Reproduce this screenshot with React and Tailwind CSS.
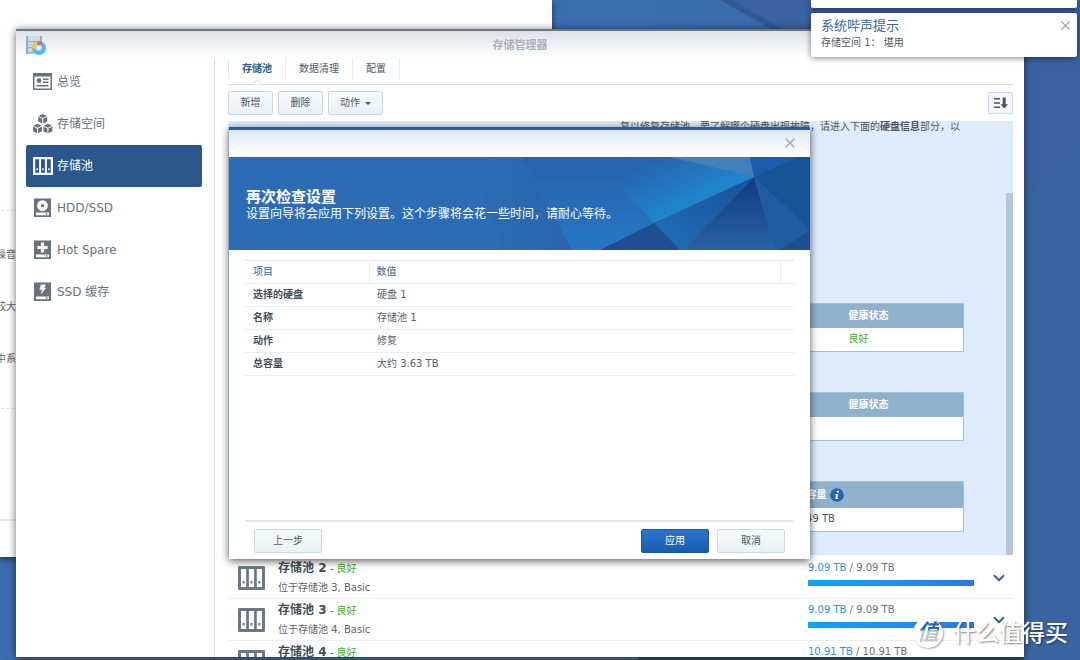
import clsx from 'clsx'
import { ChevronDown, X } from 'lucide-react'

function OverviewIcon() {
  return (
    <svg width="20" height="18" viewBox="0 0 20 18" fill="currentColor">
      <path fillRule="evenodd" d="M0 0h19v17H0zM1.5 3.5v12h16v-12z" />
      <circle cx="6" cy="7.6" r="2.4" />
      <path d="M10 5.5h5.5v1.5H10zM10 8.5h5.5V10H10zM3.5 12h12v1.5h-12z" />
    </svg>
  )
}

function Cube({ x, y }) {
  return (
    <g transform={`translate(${x} ${y})`}>
      <path d="M4.5 0 8.6 1.9 4.5 3.9.4 1.9z" />
      <path d="M0 2.8 4 4.8v4.6L0 7.4z" />
      <path d="M9 2.8 5 4.8v4.6l4-2z" />
    </g>
  )
}

function VolumeIcon() {
  return (
    <svg width="20" height="20" viewBox="0 0 20 20" fill="currentColor">
      <Cube x={5.2} y={0} />
      <Cube x={0} y={9.8} />
      <Cube x={10.4} y={9.8} />
    </svg>
  )
}

function PoolIcon({ className }) {
  return (
    <svg className={className} viewBox="0 0 27 24" fill="currentColor">
      <path
        fillRule="evenodd"
        d="M1 0h25a1 1 0 0 1 1 1v22a1 1 0 0 1-1 1H1a1 1 0 0 1-1-1V1a1 1 0 0 1 1-1zM3 3v18h5.2V3zM10.9 3v18h5.2V3zM18.8 3v18H24V3z"
      />
      <path d="M4.6 15h2v2.6h-2zM12.5 15h2v2.6h-2zM20.4 15h2v2.6h-2z" />
    </svg>
  )
}

function DriveIcon({ children }) {
  return (
    <svg width="20" height="20" viewBox="0 0 20 20" fill="currentColor">
      <path fillRule="evenodd" d="M1 .5h17v18.5H1zM3 14.5v2.8h13v-2.8z" />
      <path d="M12.8 15.2h1.6v1.4h-1.6z" />
      {children}
    </svg>
  )
}

const navItems = [
  { label: '总览', icon: <OverviewIcon /> },
  { label: '存储空间', icon: <VolumeIcon /> },
  { label: '存储池', icon: <PoolIcon className="h-[18px] w-5" />, active: true },
  {
    label: 'HDD/SSD',
    icon: (
      <DriveIcon>
        <path fill="#fff" fillRule="evenodd" d="M9.5 2.2a5.4 5.4 0 1 0 0 10.8 5.4 5.4 0 0 0 0-10.8zm0 3.7a1.7 1.7 0 1 1 0 3.4 1.7 1.7 0 0 1 0-3.4z" />
      </DriveIcon>
    ),
  },
  {
    label: 'Hot Spare',
    icon: (
      <DriveIcon>
        <path fill="#fff" d="M7.9 2.6h3.2v3.3h3.5v3.2h-3.5v3.5H7.9V9.1H4.4V5.9h3.5z" />
      </DriveIcon>
    ),
  },
  {
    label: 'SSD 缓存',
    icon: (
      <DriveIcon>
        <path fill="#fff" d="M8 2.6h5l-1.8 3.2h2.1l-5.8 6.8 1.6-4.8H6.4z" />
      </DriveIcon>
    ),
  },
]

const pools = [
  { name: '存储池 2', place: '位于存储池 3, Basic', size: '9.09 TB' },
  { name: '存储池 3', place: '位于存储池 4, Basic', size: '9.09 TB' },
  { name: '存储池 4', place: '位于存储池 5, Basic', size: '10.91 TB' },
]

const settings = [
  ['选择的硬盘', '硬盘 1'],
  ['名称', '存储池 1'],
  ['动作', '修复'],
  ['总容量', '大约 3.63 TB'],
]

function Wallpaper() {
  return (
    <svg className="absolute inset-0 h-full w-full" viewBox="0 0 1080 660" preserveAspectRatio="none">
      <defs>
        <linearGradient id="wall" x1="0" x2="1" y1="0" y2="0">
          <stop offset="0" stopColor="#3c6eb0" />
          <stop offset="0.6" stopColor="#3c6eb1" />
          <stop offset="1" stopColor="#3a649f" />
        </linearGradient>
      </defs>
      <path fill="url(#wall)" d="M0 0h1080v660H0z" />
      <path fill="#3b62a1" d="M731 0h349v150L1024 200z" />
      <path fill="#325994" d="M720 0h11l52 29h-12z" />
      <path fill="#2f4f82" d="M636 656h388v4H640z" />
    </svg>
  )
}

function Button({ className, primary, children }) {
  return (
    <button
      type="button"
      className={clsx(
        'flex items-center justify-center rounded-[2px] border bg-gradient-to-b',
        primary
          ? 'border-[#1c57a4] from-[#2c74cb] to-[#165cb3] text-white'
          : 'border-[#cbd7e2] from-[#f6fafd] to-[#e9f0f6] text-[#4f5962]',
        className,
      )}
    >
      {children}
    </button>
  )
}

function BackgroundWindow() {
  return (
    <div className="absolute top-0 right-[528px] bottom-[103px] -left-1 flex flex-col bg-white pt-[210px] text-[#5f656b] shadow-[0_2px_8px_rgba(0,0,0,0.5)]">
      <div className="border-t border-dashed border-[#d8e6f2] pt-9">噪音</div>
      <div className="pt-9">较大</div>
      <div className="pt-9">中系</div>
      <div className="mt-[41px] border-t border-dashed border-[#d8e6f2]" />
      <div className="mt-auto h-[38px] border-t-2 border-[#e6e7e9]" />
    </div>
  )
}

function Sidebar() {
  return (
    <nav className="w-[199px] shrink-0 border-r border-[#dcdfe2] pt-[3px] pr-3 pl-[10px] text-xs">
      {navItems.map((item) => (
        <a
          key={item.label}
          href="#"
          className={clsx(
            'flex h-[42px] items-center gap-1 rounded-[2px] pl-[7px]',
            item.active ? 'bg-[#2a588c] text-white' : 'text-[#68717c]',
          )}
        >
          {item.icon}
          <span>{item.label}</span>
        </a>
      ))}
    </nav>
  )
}

function Tabs() {
  return (
    <div className="relative border-b border-[#d5d8dc] pb-[5px]">
      <div className="flex h-[21px] border-l border-[#e1e9f1]">
        {['存储池', '数据清理', '配置'].map((tab, i) => (
          <button
            key={tab}
            type="button"
            className={clsx(
              'border-r border-[#e1e9f1] px-[13px]',
              i === 0 ? 'font-bold text-[#2d5b92]' : 'text-[#4f5962]',
            )}
          >
            {tab}
          </button>
        ))}
      </div>
      <svg className="absolute -bottom-px left-6" width="10" height="6" viewBox="0 0 10 6">
        <path d="M0 5.5 5 .5l5 5" fill="#fff" stroke="#d5d8dc" />
      </svg>
    </div>
  )
}

function Toolbar() {
  return (
    <div className="flex items-center gap-[5px] py-[6px]">
      <Button className="h-6 w-[45px]">新增</Button>
      <Button className="h-6 w-[45px]">删除</Button>
      <Button className="h-6 w-[55px] gap-[5px]">
        动作
        <svg width="6" height="3" viewBox="0 0 6 3" fill="currentColor">
          <path d="M0 0h6L3 3z" />
        </svg>
      </Button>
      <button
        type="button"
        aria-label="排序"
        className="ml-auto flex h-[22px] w-[25px] items-center justify-center rounded-[2px] border border-[#cbd7e2] bg-[#f3f7fb] text-[#4a525c]"
      >
        <svg width="14" height="12" viewBox="0 0 14 12" fill="currentColor">
          <path d="M0 1h6v1.6H0zM0 5.2h6v1.6H0zM0 9.4h6V11H0zM8.7.6h3v6.6H14l-3.8 4.2-3.6-4.2h2.1z" />
        </svg>
      </button>
    </div>
  )
}

function InfoTable({ head, value, colClass, headClass, children }) {
  return (
    <table className="w-full table-fixed border border-[#a5bfd6] bg-white text-left">
      <colgroup>
        <col />
        <col className={colClass} />
      </colgroup>
      <thead>
        <tr className={clsx('bg-[#8fb1cc] text-white', headClass)}>
          <th />
          <th className="pl-[9px] font-bold">
            <span className="flex items-center gap-[3px]">
              {head}
              {children}
            </span>
          </th>
        </tr>
      </thead>
      <tbody>
        <tr className="h-6">
          <td />
          <td className="pl-[9px]">{value}</td>
        </tr>
      </tbody>
    </table>
  )
}

function PoolDetails() {
  return (
    <div className="relative bg-[#deebfb] pr-[49px] pb-[23px] pl-[50px] text-[#50575e]">
      <p className="pr-1 text-right leading-3">
        复以修复存储池，要了解哪个硬盘出现故障，请进入下面的<b>硬盘信息</b>部分，以
      </p>
      <div className="flex flex-col gap-10 pt-[170px]">
        <InfoTable
          head="健康状态"
          value={<span className="text-[#3daf2c]">良好</span>}
          colClass="w-[124px]"
          headClass="h-6"
        />
        <InfoTable head="健康状态" colClass="w-[124px]" headClass="h-6" />
        <InfoTable head="总容量" value="5.49 TB" colClass="w-[176px]" headClass="h-[26px]">
          <svg width="14" height="14" viewBox="0 0 14 14">
            <circle cx="7" cy="7" r="6.8" fill="#2064b4" />
            <circle cx="7.9" cy="3.7" r="1.1" fill="#fff" />
            <path d="M5.3 6h2.9L7.3 10h1l-.2.9H5.2L6 6.9H5.1z" fill="#fff" />
          </svg>
        </InfoTable>
      </div>
      <div className="absolute top-[72px] right-0 bottom-0 w-[7px] bg-[#b7c6d7]" />
    </div>
  )
}

function PoolRow({ pool }) {
  return (
    <div className="flex h-[42px] shrink-0 items-center border-b border-[#eceff5] pr-[5px] pl-[10px]">
      <PoolIcon className="h-6 w-[27px] text-[#6c7783]" />
      <div className="ml-[13px] flex-1">
        <div className="leading-4 text-[#3daf2c]">
          <b className="text-xs leading-4 text-[#454c54]">{pool.name}</b>
          <span className="text-[#50575e]"> - </span>
          良好
        </div>
        <div className="mt-[3px] leading-4 text-[#5b636b]">{pool.place}</div>
      </div>
      <div className="w-[166px] self-start pt-[3px]">
        <div className="leading-4 text-[#6a6f75]">
          <span className="text-[#2f8be6]">{pool.size}</span> / {pool.size}
        </div>
        <div className="mt-1 h-[6px] bg-gradient-to-r from-[#02a7fd] to-[#2c77e3]" />
      </div>
      <button type="button" aria-label="展开" className="ml-4 text-[#35609b]">
        <ChevronDown size={18} strokeWidth={2.5} />
      </button>
    </div>
  )
}

function AppIcon() {
  return (
    <svg width="21" height="19" viewBox="0 0 21 19">
      <path fill="#c9dbe9" d="M0 0h16v18H0z" />
      <path fill="#90adc3" d="M0 0h2v18H0zM14 0h2v8h-2zM2 5h12v1.2H2zM2 11h5v1.2H2zM2 16h5v1.2H2z" />
      <circle cx="13" cy="12" r="5" fill="none" stroke="#52b7f5" strokeWidth="4" />
      <path fill="#fbc94a" d="M11.5 5.2v4.3l-1.7 4-3.5-1.3c0-3.6 2.2-6.3 5.2-7z" />
      <path fill="#f0605d" d="M11.5 5.2c1.6-.4 3.3-.1 4.6.7l-2 3.4-2.6.2z" />
      <circle cx="12.8" cy="11.6" r="1.9" fill="#eef7fd" />
    </svg>
  )
}

function StorageManager() {
  return (
    <div className="absolute top-[29px] right-14 bottom-[3px] left-4 flex flex-col overflow-hidden border-t-2 border-[#6c7681] bg-white shadow-[0_1px_8px_rgba(0,0,0,0.6)]">
      <header className="grid h-[27px] shrink-0 grid-cols-[1fr_auto_1fr] items-center bg-gradient-to-b from-[#dde2e7] to-white px-[10px] pt-[2px]">
        <AppIcon />
        <h1 className="text-[11px] font-bold text-[#abb2b9]">存储管理器</h1>
      </header>
      <div className="flex min-h-0 flex-1">
        <Sidebar />
        <main className="flex min-w-0 flex-1 flex-col pr-[11px] pl-[13px]">
          <Tabs />
          <Toolbar />
          <PoolDetails />
          <div className="flex flex-col pt-[2px]">
            {pools.map((pool) => (
              <PoolRow key={pool.name} pool={pool} />
            ))}
          </div>
        </main>
      </div>
    </div>
  )
}

function BannerArt() {
  return (
    <svg className="absolute inset-0 h-full w-full" viewBox="0 0 581 93" preserveAspectRatio="xMaxYMid slice">
      <defs>
        <linearGradient id="left" x1="0" x2="0" y1="0" y2="1">
          <stop offset="0" stopColor="#2863aa" />
          <stop offset="1" stopColor="#2577c4" />
        </linearGradient>
        <linearGradient id="bright" gradientUnits="userSpaceOnUse" x1="400" y1="14" x2="425" y2="66">
          <stop offset="0" stopColor="#2765ae" />
          <stop offset="1" stopColor="#1f86ce" />
        </linearGradient>
        <linearGradient id="dark" x1="0" x2="0" y1="0" y2="1">
          <stop offset="0" stopColor="#103c84" />
          <stop offset="1" stopColor="#2a61a3" />
        </linearGradient>
        <linearGradient id="low" x1="1" x2="0" y1="0" y2="1">
          <stop offset="0" stopColor="#1a4f98" />
          <stop offset="1" stopColor="#2070b8" />
        </linearGradient>
        <linearGradient id="shade" x1="0" x2="1" y1="0" y2="0">
          <stop offset="0" stopColor="#2c6cb4" />
          <stop offset="1" stopColor="#2a66ac" />
        </linearGradient>
      </defs>
      <path fill="#2c6cb4" d="M0 0h581v93H0z" />
      <path fill="url(#shade)" d="M240 0h53l50 93h-70z" />
      <path fill="url(#left)" d="M293 0h150l82 20-154 73h-28z" />
      <path fill="url(#bright)" d="M365 4 441 0l84 20-100 46z" />
      <path fill="#4280ba" d="M441 0h80l4 20z" />
      <path fill="#1a5cae" d="M521 0h47l-43 20z" />
      <path fill="#195397" d="M525 20 568 0h13v73z" />
      <path fill="#1f5ca1" d="m525 20 56 53-30 20h-5z" />
      <path fill="#1d4f8f" d="M581 73v20h-30z" />
      <path fill="url(#dark)" d="m525 20 21 73h-92z" />
      <path fill="url(#low)" d="m525 20-71 73h-3l-26-27z" />
      <path fill="#1f4f93" d="m425 66 26 27h-80z" />
    </svg>
  )
}

function Wizard() {
  return (
    <div
      role="dialog"
      aria-labelledby="wizard-title"
      className="absolute top-[127px] right-[270px] bottom-[101px] left-[229px] flex flex-col border-t-[3px] border-[#2a5b95] bg-white shadow-[0_2px_8px_rgba(0,0,0,0.65)]"
    >
      <div className="flex h-[27px] shrink-0 items-center justify-end bg-gradient-to-b from-[#e2e8f1] to-white pr-3 pb-[2px]">
        <button type="button" aria-label="关闭" className="text-[#a0a6ad]">
          <X size={16} strokeWidth={2} />
        </button>
      </div>
      <div className="relative flex h-[93px] shrink-0 flex-col justify-center px-[17px] pt-1 text-white">
        <BannerArt />
        <h2 id="wizard-title" className="relative text-[15px] leading-4 font-bold">
          再次检查设置
        </h2>
        <p className="relative text-xs leading-[18px]">
          设置向导将会应用下列设置。这个步骤将会花一些时间，请耐心等待。
        </p>
      </div>
      <div className="flex-1 px-4 pt-[10px]">
        <table className="w-full table-fixed border-t border-[#dfe7f1] text-left text-[#5a6067]">
          <colgroup>
            <col className="w-[124px]" />
            <col />
            <col className="w-[14px]" />
          </colgroup>
          <thead>
            <tr className="h-[23px] border-b border-[#e6edf5] text-[#35649a]">
              <th className="pl-2 font-normal">项目</th>
              <th className="border-l border-[#e6edf5] pl-[7px] font-normal">数值</th>
              <th className="border-l border-[#e6edf5]" />
            </tr>
          </thead>
          <tbody>
            {settings.map(([name, value]) => (
              <tr key={name} className="h-[23px] border-b border-[#e9eef4]">
                <th className="pl-2 font-bold text-[#454c54]">{name}</th>
                <td colSpan={2} className="pl-2">
                  {value}
                </td>
              </tr>
            ))}
          </tbody>
        </table>
      </div>
      <div className="mx-4 flex gap-2 border-t-2 border-[#e3e5e8] px-[9px] pt-[7px] pb-[6px]">
        <Button className="mr-auto h-6 w-[68px]">上一步</Button>
        <Button primary className="h-6 w-[68px]">
          应用
        </Button>
        <Button className="h-6 w-[68px]">取消</Button>
      </div>
    </div>
  )
}

function Notifications() {
  return (
    <div className="absolute top-0 right-[3px] flex w-[266px] flex-col gap-[5px]">
      <div className="h-2 rounded-b-[2px] bg-white shadow-[0_1px_6px_rgba(0,0,0,0.5)]" />
      <div className="flex h-11 items-start justify-between rounded-[2px] bg-white pt-[5px] pr-1 pl-[10px] shadow-[0_1px_6px_rgba(0,0,0,0.5)]">
        <div>
          <h3 className="text-[13px] leading-4 text-[#3a6599]">系统哔声提示</h3>
          <p className="leading-[18px] text-[#50575e]">存储空间 1： 堪用</p>
        </div>
        <button type="button" aria-label="关闭通知" className="text-[#a0a6ad]">
          <X size={15} strokeWidth={2} />
        </button>
      </div>
    </div>
  )
}

function Watermark() {
  return (
    <div className="absolute right-3 bottom-3 flex items-center gap-[10px] text-white">
      <div className="flex h-[30px] w-[30px] items-center justify-center rounded-full bg-white shadow-[1px_1px_2px_rgba(0,0,0,0.35)]">
        <span className="bg-gradient-to-b from-[#2464b0] from-35% to-[#c3c6ca] to-45% bg-clip-text text-[22px] leading-[30px] font-bold text-transparent italic">
          值
        </span>
      </div>
      <span className="text-[23px] leading-[30px] font-medium [text-shadow:1px_1px_2px_rgba(0,0,0,0.5)]">什么值得买</span>
    </div>
  )
}

export default function App() {
  return (
    <div className="relative h-screen overflow-hidden bg-[#3b66a6] font-['DejaVu_Sans','Noto_Sans_CJK_SC',sans-serif] text-[10px] leading-4">
      <Wallpaper />
      <BackgroundWindow />
      <StorageManager />
      <Wizard />
      <Notifications />
      <Watermark />
    </div>
  )
}
